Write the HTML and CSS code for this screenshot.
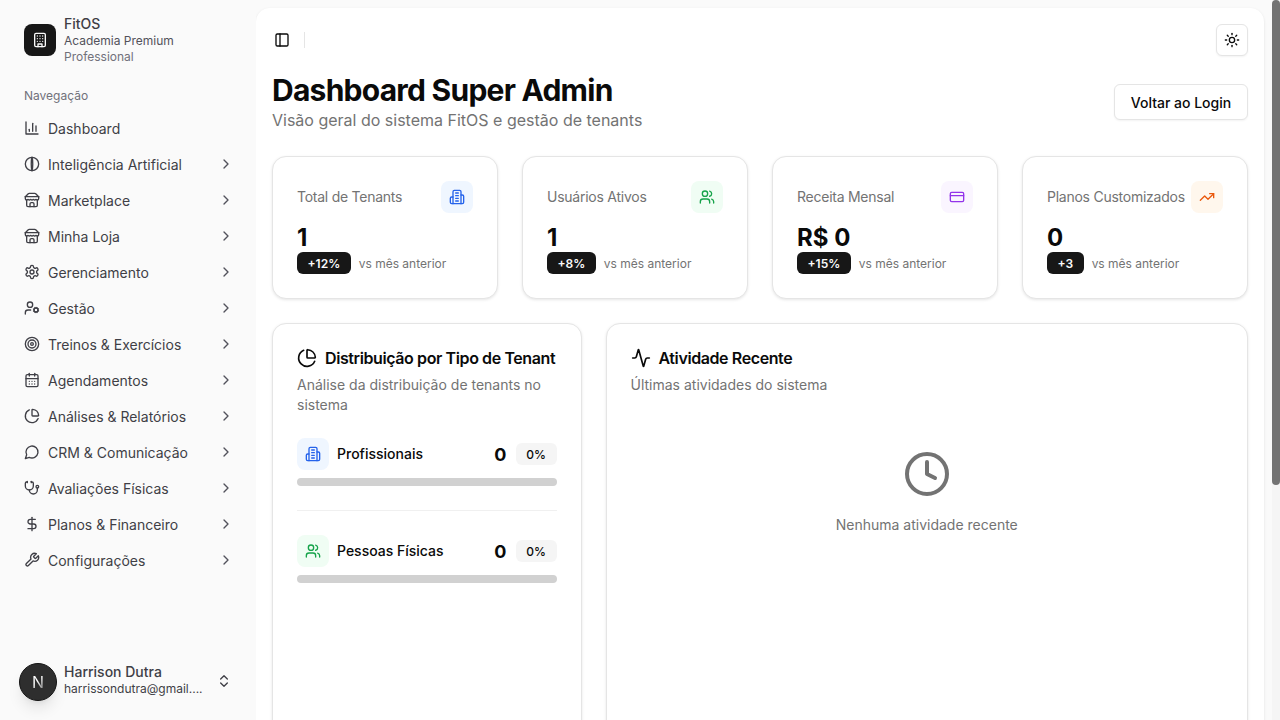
FILE: index.html
```html
<!DOCTYPE html>
<html lang="pt-BR">
<head>
    <meta charset="UTF-8">
    <meta name="viewport" content="width=device-width, initial-scale=1.0">
    <title>FitOS - Dashboard Super Admin</title>
    <link rel="stylesheet" href="styles.css">
</head>
<body>
    <svg class="icon-defs" width="0" height="0">
        <symbol id="i-chart" viewBox="0 0 24 24"><path d="M3 3v18h18"/><path d="M18 17V9"/><path d="M13 17V5"/><path d="M8 17v-3"/></symbol>
        <symbol id="i-brain" viewBox="0 0 24 24"><circle cx="12" cy="12" r="10"/><path d="M12 2c-1.5 4-1.5 16 0 20"/><path d="M12 2c1.5 4 1.5 16 0 20"/></symbol>
        <symbol id="i-store" viewBox="0 0 24 24"><path d="m2 7 4.41-4.41A2 2 0 0 1 7.83 2h8.34a2 2 0 0 1 1.42.59L22 7"/><path d="M4 12v8a2 2 0 0 0 2 2h12a2 2 0 0 0 2-2v-8"/><path d="M15 22v-4a2 2 0 0 0-2-2h-2a2 2 0 0 0-2 2v4"/><path d="M2 7h20"/><path d="M22 7v3a2 2 0 0 1-2 2a2.7 2.7 0 0 1-1.59-.63.7.7 0 0 0-.82 0A2.7 2.7 0 0 1 16 12a2.7 2.7 0 0 1-1.59-.63.7.7 0 0 0-.82 0A2.7 2.7 0 0 1 12 12a2.7 2.7 0 0 1-1.59-.63.7.7 0 0 0-.82 0A2.7 2.7 0 0 1 8 12a2.7 2.7 0 0 1-1.59-.63.7.7 0 0 0-.82 0A2.7 2.7 0 0 1 4 12a2 2 0 0 1-2-2V7"/></symbol>
        <symbol id="i-settings" viewBox="0 0 24 24"><path d="M12.22 2h-.44a2 2 0 0 0-2 2v.18a2 2 0 0 1-1 1.73l-.43.25a2 2 0 0 1-2 0l-.15-.08a2 2 0 0 0-2.73.73l-.22.38a2 2 0 0 0 .73 2.73l.15.1a2 2 0 0 1 1 1.72v.51a2 2 0 0 1-1 1.74l-.15.09a2 2 0 0 0-.73 2.73l.22.38a2 2 0 0 0 2.73.73l.15-.08a2 2 0 0 1 2 0l.43.25a2 2 0 0 1 1 1.73V20a2 2 0 0 0 2 2h.44a2 2 0 0 0 2-2v-.18a2 2 0 0 1 1-1.73l.43-.25a2 2 0 0 1 2 0l.15.08a2 2 0 0 0 2.73-.73l.22-.39a2 2 0 0 0-.73-2.73l-.15-.08a2 2 0 0 1-1-1.74v-.5a2 2 0 0 1 1-1.74l.15-.09a2 2 0 0 0 .73-2.73l-.22-.38a2 2 0 0 0-2.73-.73l-.15.08a2 2 0 0 1-2 0l-.43-.25a2 2 0 0 1-1-1.73V4a2 2 0 0 0-2-2z"/><circle cx="12" cy="12" r="3"/></symbol>
        <symbol id="i-usercog" viewBox="0 0 24 24"><circle cx="18" cy="15" r="3"/><circle cx="9" cy="7" r="4"/><path d="M10 15H6a4 4 0 0 0-4 4v2"/><path d="m21.7 16.4-.9-.3"/><path d="m15.2 13.9-.9-.3"/><path d="m16.6 18.7.3-.9"/><path d="m19.1 12.2.3-.9"/><path d="m19.6 18.7-.4-1"/><path d="m16.8 12.3-.4-1"/><path d="m14.3 16.6 1-.4"/><path d="m20.7 13.8 1-.4"/></symbol>
        <symbol id="i-target" viewBox="0 0 24 24"><circle cx="12" cy="12" r="10"/><circle cx="12" cy="12" r="6"/><circle cx="12" cy="12" r="2"/></symbol>
        <symbol id="i-calendar" viewBox="0 0 24 24"><path d="M8 2v4"/><path d="M16 2v4"/><rect width="18" height="18" x="3" y="4" rx="2"/><path d="M3 10h18"/><path d="M8 14h.01"/><path d="M12 14h.01"/><path d="M16 14h.01"/><path d="M8 18h.01"/><path d="M12 18h.01"/><path d="M16 18h.01"/></symbol>
        <symbol id="i-pie" viewBox="0 0 24 24"><path d="M21 12c.552 0 1.005-.449.95-.998a10 10 0 0 0-8.953-8.951c-.55-.055-.998.398-.998.95v8a1 1 0 0 0 1 1z"/><path d="M21.21 15.89A10 10 0 1 1 8 2.83"/></symbol>
        <symbol id="i-message" viewBox="0 0 24 24"><path d="M7.9 20A9 9 0 1 0 4 16.1L2 22Z"/></symbol>
        <symbol id="i-stethoscope" viewBox="0 0 24 24"><path d="M11 2v2"/><path d="M5 2v2"/><path d="M5 3H4a2 2 0 0 0-2 2v4a6 6 0 0 0 12 0V5a2 2 0 0 0-2-2h-1"/><path d="M8 15a6 6 0 0 0 12 0v-3"/><circle cx="20" cy="10" r="2"/></symbol>
        <symbol id="i-dollar" viewBox="0 0 24 24"><path d="M12 2v20"/><path d="M17 5H9.5a3.5 3.5 0 0 0 0 7h5a3.5 3.5 0 0 1 0 7H6"/></symbol>
        <symbol id="i-wrench" viewBox="0 0 24 24"><path d="M14.7 6.3a1 1 0 0 0 0 1.4l1.6 1.6a1 1 0 0 0 1.4 0l3.77-3.77a6 6 0 0 1-7.94 7.94l-6.91 6.91a2.12 2.12 0 0 1-3-3l6.91-6.91a6 6 0 0 1 7.94-7.94l-3.76 3.76z"/></symbol>
        <symbol id="i-chevron" viewBox="0 0 24 24"><path d="m9 18 6-6-6-6"/></symbol>
        <symbol id="i-updown" viewBox="0 0 24 24"><path d="m7 15 5 5 5-5"/><path d="m7 9 5-5 5 5"/></symbol>
        <symbol id="i-panel" viewBox="0 0 24 24"><rect width="18" height="18" x="3" y="3" rx="2"/><path d="M9 3v18"/></symbol>
        <symbol id="i-sun" viewBox="0 0 24 24"><circle cx="12" cy="12" r="4"/><path d="M12 2v2"/><path d="M12 20v2"/><path d="m4.93 4.93 1.41 1.41"/><path d="m17.66 17.66 1.41 1.41"/><path d="M2 12h2"/><path d="M20 12h2"/><path d="m6.34 17.66-1.41 1.41"/><path d="m19.07 4.93-1.41 1.41"/></symbol>
        <symbol id="i-building2" viewBox="0 0 24 24"><path d="M6 22V4a2 2 0 0 1 2-2h8a2 2 0 0 1 2 2v18Z"/><path d="M6 12H4a2 2 0 0 0-2 2v6a2 2 0 0 0 2 2h2"/><path d="M18 9h2a2 2 0 0 1 2 2v9a2 2 0 0 1-2 2h-2"/><path d="M10 6h4"/><path d="M10 10h4"/><path d="M10 14h4"/><path d="M10 18h4"/></symbol>
        <symbol id="i-building" viewBox="0 0 24 24"><rect width="16" height="20" x="4" y="2" rx="2"/><path d="M9 22v-4h6v4"/><path d="M8 6h.01"/><path d="M16 6h.01"/><path d="M12 6h.01"/><path d="M12 10h.01"/><path d="M12 14h.01"/><path d="M16 10h.01"/><path d="M16 14h.01"/><path d="M8 10h.01"/><path d="M8 14h.01"/></symbol>
        <symbol id="i-users" viewBox="0 0 24 24"><path d="M16 21v-2a4 4 0 0 0-4-4H6a4 4 0 0 0-4 4v2"/><circle cx="9" cy="7" r="4"/><path d="M22 21v-2a4 4 0 0 0-3-3.87"/><path d="M16 3.13a4 4 0 0 1 0 7.75"/></symbol>
        <symbol id="i-card" viewBox="0 0 24 24"><rect width="20" height="14" x="2" y="5" rx="2"/><path d="M2 10h20"/></symbol>
        <symbol id="i-trending" viewBox="0 0 24 24"><path d="M22 7 13.5 15.5 8.5 10.5 2 17"/><path d="M16 7h6v6"/></symbol>
        <symbol id="i-activity" viewBox="0 0 24 24"><path d="M22 12h-2.48a2 2 0 0 0-1.93 1.46l-2.35 8.36a.25.25 0 0 1-.48 0L9.24 2.18a.25.25 0 0 0-.48 0l-2.35 8.36A2 2 0 0 1 4.49 12H2"/></symbol>
        <symbol id="i-clock" viewBox="0 0 24 24"><circle cx="12" cy="12" r="10"/><path d="M12 6v6l4 2"/></symbol>
    </svg>

    <div class="shell">
        <aside class="sidebar">
            <div class="brand">
                <div class="brand-logo"><svg class="icon"><use href="#i-building"/></svg></div>
                <div class="brand-text">
                    <div class="brand-name">FitOS</div>
                    <div class="brand-sub">Academia Premium</div>
                    <div class="brand-plan">Professional</div>
                </div>
            </div>

            <div class="nav-label">Navegação</div>
            <nav class="nav">
                <a class="nav-item"><svg class="icon"><use href="#i-chart"/></svg><span>Dashboard</span></a>
                <a class="nav-item"><svg class="icon"><use href="#i-brain"/></svg><span>Inteligência Artificial</span><svg class="icon chevron"><use href="#i-chevron"/></svg></a>
                <a class="nav-item"><svg class="icon"><use href="#i-store"/></svg><span>Marketplace</span><svg class="icon chevron"><use href="#i-chevron"/></svg></a>
                <a class="nav-item"><svg class="icon"><use href="#i-store"/></svg><span>Minha Loja</span><svg class="icon chevron"><use href="#i-chevron"/></svg></a>
                <a class="nav-item"><svg class="icon"><use href="#i-settings"/></svg><span>Gerenciamento</span><svg class="icon chevron"><use href="#i-chevron"/></svg></a>
                <a class="nav-item"><svg class="icon"><use href="#i-usercog"/></svg><span>Gestão</span><svg class="icon chevron"><use href="#i-chevron"/></svg></a>
                <a class="nav-item"><svg class="icon"><use href="#i-target"/></svg><span>Treinos &amp; Exercícios</span><svg class="icon chevron"><use href="#i-chevron"/></svg></a>
                <a class="nav-item"><svg class="icon"><use href="#i-calendar"/></svg><span>Agendamentos</span><svg class="icon chevron"><use href="#i-chevron"/></svg></a>
                <a class="nav-item"><svg class="icon"><use href="#i-pie"/></svg><span>Análises &amp; Relatórios</span><svg class="icon chevron"><use href="#i-chevron"/></svg></a>
                <a class="nav-item"><svg class="icon"><use href="#i-message"/></svg><span>CRM &amp; Comunicação</span><svg class="icon chevron"><use href="#i-chevron"/></svg></a>
                <a class="nav-item"><svg class="icon"><use href="#i-stethoscope"/></svg><span>Avaliações Físicas</span><svg class="icon chevron"><use href="#i-chevron"/></svg></a>
                <a class="nav-item"><svg class="icon"><use href="#i-dollar"/></svg><span>Planos &amp; Financeiro</span><svg class="icon chevron"><use href="#i-chevron"/></svg></a>
                <a class="nav-item"><svg class="icon"><use href="#i-wrench"/></svg><span>Configurações</span><svg class="icon chevron"><use href="#i-chevron"/></svg></a>
            </nav>

            <div class="user">
                <div class="avatar"><span class="avatar-letter">N</span></div>
                <div class="user-text">
                    <div class="user-name">Harrison Dutra</div>
                    <div class="user-mail">harrissondutra@gmail....</div>
                </div>
                <svg class="icon updown"><use href="#i-updown"/></svg>
            </div>
        </aside>

        <div class="scroller">
            <main class="inset">
                <header class="topbar">
                    <svg class="icon panel-icon"><use href="#i-panel"/></svg>
                    <div class="topbar-sep"></div>
                    <button class="theme-btn"><svg class="icon"><use href="#i-sun"/></svg></button>
                </header>

                <div class="page-head">
                    <div>
                        <h1>Dashboard Super Admin</h1>
                        <p class="page-sub">Visão geral do sistema FitOS e gestão de tenants</p>
                    </div>
                    <button class="outline-btn">Voltar ao Login</button>
                </div>

                <section class="stats">
                    <div class="card stat">
                        <div class="stat-top">
                            <span class="stat-label">Total de Tenants</span>
                            <span class="icon-box blue"><svg class="icon"><use href="#i-building2"/></svg></span>
                        </div>
                        <div class="stat-value">1</div>
                        <div class="stat-foot"><span class="badge">+12%</span><span class="stat-note">vs mês anterior</span></div>
                    </div>
                    <div class="card stat">
                        <div class="stat-top">
                            <span class="stat-label">Usuários Ativos</span>
                            <span class="icon-box green"><svg class="icon"><use href="#i-users"/></svg></span>
                        </div>
                        <div class="stat-value">1</div>
                        <div class="stat-foot"><span class="badge">+8%</span><span class="stat-note">vs mês anterior</span></div>
                    </div>
                    <div class="card stat">
                        <div class="stat-top">
                            <span class="stat-label">Receita Mensal</span>
                            <span class="icon-box purple"><svg class="icon"><use href="#i-card"/></svg></span>
                        </div>
                        <div class="stat-value">R$ 0</div>
                        <div class="stat-foot"><span class="badge">+15%</span><span class="stat-note">vs mês anterior</span></div>
                    </div>
                    <div class="card stat">
                        <div class="stat-top">
                            <span class="stat-label">Planos Customizados</span>
                            <span class="icon-box orange"><svg class="icon"><use href="#i-trending"/></svg></span>
                        </div>
                        <div class="stat-value">0</div>
                        <div class="stat-foot"><span class="badge">+3</span><span class="stat-note">vs mês anterior</span></div>
                    </div>
                </section>

                <section class="panels">
                    <div class="card panel">
                        <h2 class="panel-title"><svg class="icon icon-lg"><use href="#i-pie"/></svg>Distribuição por Tipo de Tenant</h2>
                        <p class="panel-desc">Análise da distribuição de tenants no sistema</p>

                        <div class="dist">
                            <div class="dist-row">
                                <span class="icon-box blue"><svg class="icon"><use href="#i-building2"/></svg></span>
                                <span class="dist-name">Profissionais</span>
                                <span class="dist-count">0</span>
                                <span class="dist-pct">0%</span>
                            </div>
                            <div class="progress"></div>
                        </div>
                        <div class="dist-sep"></div>
                        <div class="dist">
                            <div class="dist-row">
                                <span class="icon-box green"><svg class="icon"><use href="#i-users"/></svg></span>
                                <span class="dist-name">Pessoas Físicas</span>
                                <span class="dist-count">0</span>
                                <span class="dist-pct">0%</span>
                            </div>
                            <div class="progress"></div>
                        </div>
                    </div>

                    <div class="card panel">
                        <h2 class="panel-title"><svg class="icon icon-lg"><use href="#i-activity"/></svg>Atividade Recente</h2>
                        <p class="panel-desc">Últimas atividades do sistema</p>
                        <div class="empty">
                            <svg class="icon empty-icon"><use href="#i-clock"/></svg>
                            <p>Nenhuma atividade recente</p>
                        </div>
                    </div>
                </section>
            </main>
        </div>

        <div class="scrollbar"><div class="scrollbar-thumb"></div></div>
    </div>
</body>
</html>
```

FILE: styles.css
```css
* {
    box-sizing: border-box;
}

html, body {
    height: 100%;
}

body {
    margin: 0;
    font-family: 'Inter', 'Liberation Sans', sans-serif;
    font-size: 14px;
    color: #0a0a0a;
    background-color: #fafafa;
    overflow: hidden;
}

.icon-defs {
    position: absolute;
}

.icon {
    width: 16px;
    height: 16px;
    flex-shrink: 0;
    fill: none;
    stroke: currentColor;
    stroke-width: 2;
    stroke-linecap: round;
    stroke-linejoin: round;
}

.icon-lg {
    width: 20px;
    height: 20px;
}

.shell {
    display: flex;
    height: 100%;
}

/* sidebar */
.sidebar {
    width: 256px;
    flex-shrink: 0;
    display: flex;
    flex-direction: column;
    padding: 15px 16px 19px;
    background-color: #fafafa;
    color: #3f3f46;
}

.brand {
    display: flex;
    align-items: center;
    gap: 8px;
    padding: 0 8px;
}

.brand-logo {
    width: 32px;
    height: 32px;
    display: flex;
    align-items: center;
    justify-content: center;
    border-radius: 8px;
    background-color: #171717;
    color: #fafafa;
}

.brand-name {
    font-size: 14px;
    line-height: 18px;
    font-weight: 500;
}

.brand-sub,
.brand-plan {
    font-size: 12px;
    line-height: 16px;
}

.brand-sub {
    color: #52525b;
}

.brand-plan {
    color: #71717a;
}

.nav-label {
    margin-top: 23px;
    padding: 0 8px;
    font-size: 12px;
    line-height: 16px;
    color: #71717a;
}

.nav {
    flex: 1;
    margin-top: 7px;
}

.nav-item {
    display: flex;
    align-items: center;
    gap: 8px;
    height: 36px;
    padding: 0 6px 0 8px;
    line-height: 20px;
}

.nav-item span {
    flex: 1;
}

.nav-item .icon {
    margin-top: -2px;
}

.nav-item .chevron {
    color: #52525b;
}

.user {
    display: flex;
    align-items: center;
    gap: 7px;
    padding-left: 3px;
}

.avatar {
    width: 38px;
    height: 38px;
    flex-shrink: 0;
    display: flex;
    align-items: center;
    justify-content: center;
    border-radius: 50%;
    background-color: #2e2e2e;
    border: 1.5px solid #141414;
    box-shadow: 0 10px 15px -3px rgba(0, 0, 0, 0.1), 0 4px 6px -4px rgba(0, 0, 0, 0.1);
}

.avatar-letter {
    font-size: 16px;
    font-weight: 400;
    background-image: linear-gradient(135deg, #fff 45%, #8a8a8a 85%);
    -webkit-background-clip: text;
    background-clip: text;
    color: transparent;
}

.user-text {
    flex: 1;
    min-width: 0;
    margin-top: -4px;
}

.user-name {
    font-size: 14px;
    line-height: 18px;
    font-weight: 500;
}

.user-mail {
    font-size: 12px;
    line-height: 16px;
    white-space: nowrap;
}

.updown {
    margin-right: 8px;
    margin-top: -2px;
}

/* main */
.scroller {
    flex: 1;
    min-width: 0;
    height: 100%;
    padding: 8px 8px 8px 0;
    overflow: hidden;
}

.scrollbar {
    width: 8px;
    flex-shrink: 0;
    background-color: #f5f5f5;
}

.scrollbar-thumb {
    height: 485px;
    background-color: #737373;
    border-radius: 4px;
}

.inset {
    padding: 0 16px 24px;
    background-color: #fff;
    border-radius: 14px;
    box-shadow: 0 1px 3px rgba(0, 0, 0, 0.1);
}

.topbar {
    display: flex;
    align-items: center;
    height: 64px;
}

.panel-icon {
    margin-left: 2px;
}

.topbar-sep {
    width: 1px;
    height: 16px;
    margin-left: 14px;
    background-color: #e5e5e5;
}

.theme-btn {
    width: 32px;
    height: 32px;
    margin-left: auto;
    padding: 0;
    display: flex;
    align-items: center;
    justify-content: center;
    background-color: #fff;
    color: #0a0a0a;
    border: 1px solid #e5e5e5;
    border-radius: 6px;
    box-shadow: 0 1px 2px rgba(0, 0, 0, 0.05);
}

.page-head {
    display: flex;
    justify-content: space-between;
    align-items: flex-end;
}

h1 {
    margin: 0;
    font-size: 30px;
    line-height: 36px;
    font-weight: 700;
    letter-spacing: -0.75px;
    color: #0a0a0a;
}

.page-sub {
    margin: 0;
    font-size: 16px;
    line-height: 24px;
    color: #737373;
}

.outline-btn {
    height: 36px;
    width: 134px;
    margin-bottom: 12px;
    background-color: #fff;
    color: #0a0a0a;
    border: 1px solid #e5e5e5;
    border-radius: 6px;
    font-family: inherit;
    font-size: 14px;
    font-weight: 500;
    box-shadow: 0 1px 2px rgba(0, 0, 0, 0.05);
}

.card {
    background-color: #fff;
    border: 1px solid #e5e5e5;
    border-radius: 14px;
    box-shadow: 0 1px 3px rgba(0, 0, 0, 0.1);
}

.stats {
    display: grid;
    grid-template-columns: repeat(4, 1fr);
    gap: 24px;
    margin-top: 24px;
}

.stat {
    height: 143px;
    padding: 24px;
}

.stat-top {
    display: flex;
    justify-content: space-between;
    align-items: center;
}

.stat-label {
    color: #737373;
    line-height: 20px;
    letter-spacing: -0.25px;
}

.icon-box {
    width: 32px;
    height: 32px;
    flex-shrink: 0;
    display: flex;
    align-items: center;
    justify-content: center;
    border-radius: 8px;
}

.blue { background-color: #eff6ff; color: #2563eb; }
.green { background-color: #f0fdf4; color: #16a34a; }
.purple { background-color: #faf5ff; color: #9333ea; }
.orange { background-color: #fff7ed; color: #ea580c; }

.stat-value {
    margin-top: 9px;
    font-size: 24px;
    line-height: 32px;
    font-weight: 700;
}

.stat-foot {
    display: flex;
    align-items: center;
    gap: 8px;
    margin-top: -2px;
}

.badge {
    height: 22px;
    padding: 0 10.5px;
    display: flex;
    align-items: center;
    background-color: #171717;
    color: #fafafa;
    border-radius: 6px;
    font-size: 12px;
    font-weight: 600;
}

.stat-note {
    font-size: 12px;
    color: #737373;
}

.panels {
    display: grid;
    grid-template-columns: 309.5px 1fr;
    gap: 24px;
    margin-top: 24px;
    min-height: 714px;
}

.panel {
    padding: 24px;
}

.panel-title {
    display: flex;
    align-items: center;
    gap: 8px;
    margin: 0;
    font-size: 16px;
    line-height: 20px;
    font-weight: 600;
    letter-spacing: -0.4px;
    color: #0a0a0a;
}

.panel-desc {
    margin: 7px 0 0;
    color: #737373;
    line-height: 20px;
}

.dist {
    margin-top: 23px;
}

.dist-row {
    display: flex;
    align-items: center;
}

.dist-name {
    flex: 1;
    margin-left: 8px;
    font-weight: 500;
    line-height: 20px;
}

.dist-count {
    font-size: 18px;
    font-weight: 700;
}

.dist-pct {
    width: 41px;
    height: 22px;
    margin-left: 9px;
    display: flex;
    align-items: center;
    justify-content: center;
    background-color: #f5f5f5;
    border-radius: 6px;
    font-size: 12px;
    font-weight: 500;
}

.progress {
    height: 8px;
    margin-top: 8px;
    margin-left: -0.5px;
    background-color: #d1d1d1;
    border-radius: 4px;
}

.dist-sep {
    height: 1px;
    margin-top: 24px;
    margin-bottom: 24px;
    background-color: #f0f0f0;
}

.dist-sep + .dist {
    margin-top: 0;
}

.empty {
    display: flex;
    flex-direction: column;
    align-items: center;
    margin-top: 55px;
    color: #737373;
}

.empty-icon {
    width: 48px;
    height: 48px;
}

.empty p {
    margin: 17px 0 0;
    line-height: 20px;
}
```
